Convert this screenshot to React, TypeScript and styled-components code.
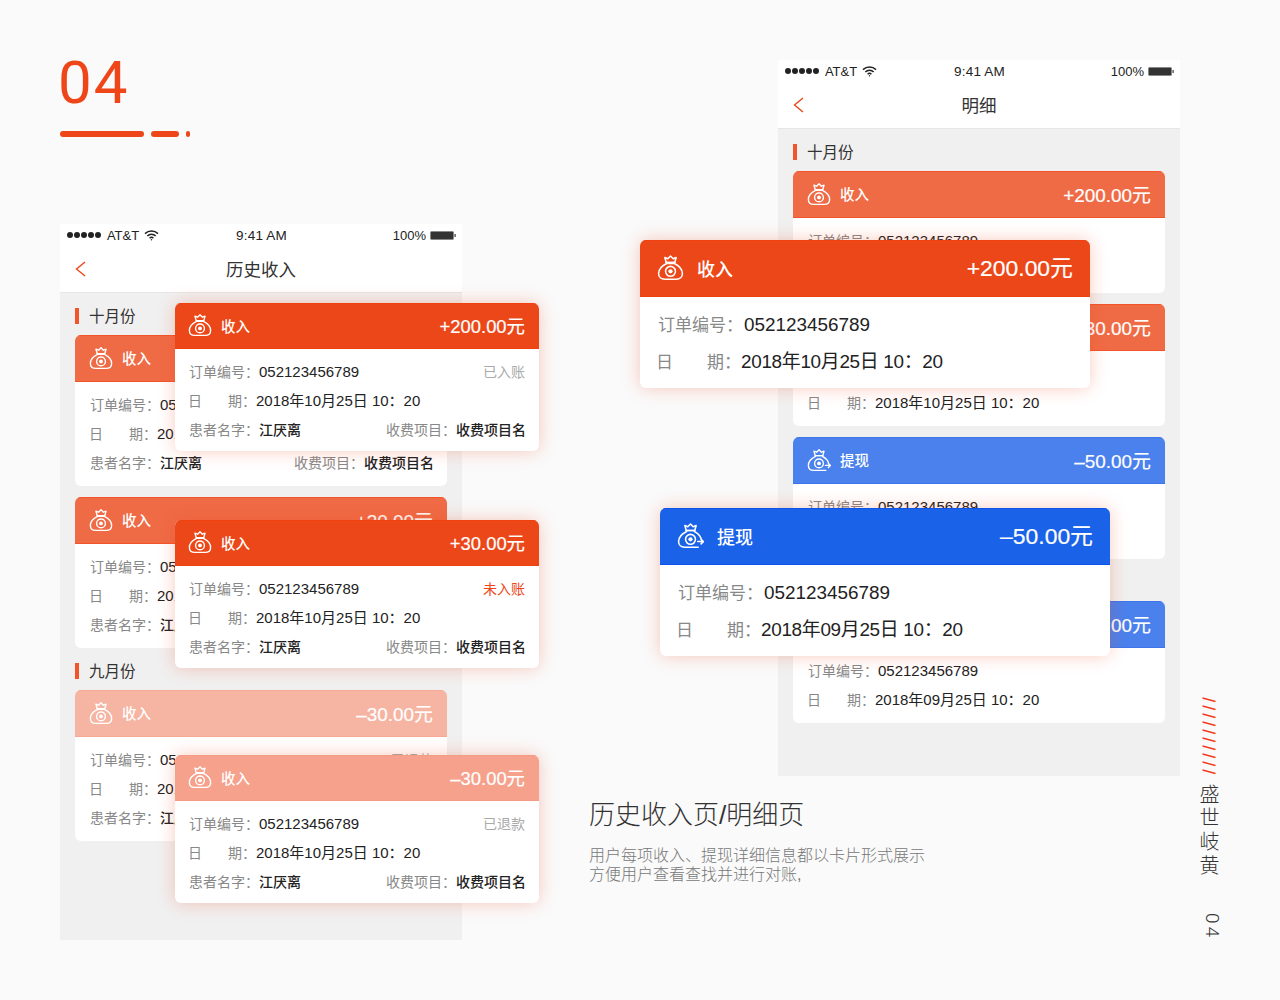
import React from 'react';
import styled, { createGlobalStyle } from 'styled-components';

const red = '#ee4618';

const GlobalStyle = createGlobalStyle`
  html, body {
    margin: 0;
    background: #fafafa;
    font-family: "Liberation Sans", "Noto Sans CJK SC", sans-serif;
    color: #333;
  }
`;

type Tone = 'orange' | 'soft' | 'pale' | 'peach' | 'blue' | 'softBlue';

const tones: Record<Tone, { bg: string; line: string }> = {
  orange: { bg: '#ec4718', line: '#f04010' },
  soft: { bg: '#ef6b46', line: '#f2552a' },
  pale: { bg: '#f6b4a2', line: '#f6aa96' },
  peach: { bg: '#f5a18c', line: '#f59a84' },
  blue: { bg: '#1a62e8', line: '#0c52ec' },
  softBlue: { bg: '#4a81ec', line: '#3d76ea' },
};

const Page = styled.div`
  position: relative;
  width: 1280px;
  height: 1000px;
  box-sizing: border-box;
  padding: 60px 50px 60px 60px;
  display: flex;
  overflow: hidden;
`;

const LeftColumn = styled.div`
  width: 402px;
  display: flex;
  flex-direction: column;
`;

const RightColumn = styled.div`
  width: 591px;
  margin-left: 127px;
  display: flex;
  flex-direction: column;
`;

const Chapter = styled.div`
  font-family: Roboto, sans-serif;
  font-size: 60px;
  line-height: 44px;
  height: 44px;
  letter-spacing: 2px;
  color: ${red};
  margin: 1px 0 0 -2px;
`;

const Dashes = styled.div`
  display: flex;
  gap: 7px;
  margin-top: 26px;
  margin-bottom: auto;
`;

const Dash = styled.span<{ $w: number }>`
  width: ${(p) => p.$w}px;
  height: 6px;
  border-radius: 3px;
  background: ${red};
`;

const Phone = styled.div<{ $alignEnd?: boolean }>`
  width: 402px;
  height: 716px;
  flex: none;
  background: #f0f0f0;
  margin-left: ${(p) => (p.$alignEnd ? 'auto' : '0')};
  overflow: hidden;
`;

const PhoneTop = styled.div`
  background: #fff;
  height: 68px;
  border-bottom: 1px solid #e6e6e6;
`;

const StatusBar = styled.div`
  height: 22px;
  padding: 0 6px 0 7px;
  display: flex;
  align-items: center;
  justify-content: space-between;
  font-size: 13px;
  color: #222;
`;

const StatusSide = styled.div`
  width: 140px;
  display: flex;
  align-items: center;
  gap: 4px;
  &:last-child {
    justify-content: flex-end;
  }
`;

const Clock = styled.span`
  font-size: 13.5px;
  letter-spacing: 0.2px;
`;

const WifiWrap = styled.span`
  display: flex;
  margin-left: 1px;
`;

const SignalDots = styled.div`
  display: flex;
  gap: 1.1px;
  margin-right: 1.5px;
  & i {
    width: 6px;
    height: 6px;
    border-radius: 50%;
    background: #222;
  }
`;

const NavBar = styled.div`
  position: relative;
  height: 44px;
  padding-bottom: 2px;
  display: flex;
  align-items: center;
  justify-content: center;
  font-size: 17.5px;
  color: #333;
`;

const BackIcon = styled.svg`
  position: absolute;
  left: 15px;
  top: 15px;
`;

const PhoneBody = styled.div`
  padding: 0 15px;
`;

const Month = styled.div`
  margin: 15px 0 11px;
  height: 16px;
  padding-left: 14px;
  position: relative;
  font-size: 15.5px;
  line-height: 17px;
  color: #333;
  &::before {
    content: '';
    position: absolute;
    left: 0;
    top: 0;
    width: 4px;
    height: 16px;
    background: #f2552a;
  }
`;

const Card = styled.div<{ $floating?: boolean; $shadow?: string }>`
  background: #fff;
  border-radius: 6px;
  overflow: hidden;
  margin-bottom: ${(p) => (p.$floating ? '0' : '11px')};
  box-shadow: ${(p) => (p.$shadow ? `0 0 18px ${p.$shadow}` : 'none')};
`;

const Floating = styled(Card)<{ $x: number; $y: number; $w: number }>`
  position: absolute;
  left: ${(p) => p.$x}px;
  top: ${(p) => p.$y}px;
  width: ${(p) => p.$w}px;
  height: 148px;
`;

const CardHead = styled.div<{ $tone: Tone; $big?: boolean; $floating?: boolean }>`
  box-sizing: border-box;
  height: ${(p) => (p.$big ? 57 : p.$floating ? 46 : 47)}px;
  padding: ${(p) => (p.$big ? '0 17px 2px 17px' : p.$floating ? '0 14px 2px 13px' : '0 14px 2px 14px')};
  display: flex;
  align-items: center;
  background: ${(p) => tones[p.$tone].bg};
  border-bottom: 1px solid ${(p) => tones[p.$tone].line};
  border-top: 1px solid ${(p) => tones[p.$tone].line};
  color: #fff;
`;

const HeadTitle = styled.span<{ $big?: boolean }>`
  font-size: ${(p) => (p.$big ? 18 : 14.5)}px;
  font-weight: 500;
  margin-left: ${(p) => (p.$big ? 13 : 9)}px;
  margin-right: auto;
`;

const Amount = styled.span<{ $big?: boolean; $floating?: boolean }>`
  font-size: ${(p) => (p.$big ? 22.9 : p.$floating ? 18.4 : 18.9)}px;
  padding-bottom: ${(p) => (p.$big ? 3 : 0)}px;
  -webkit-text-stroke: 0.2px #fff;
`;

const CardBody = styled.div<{ $big?: boolean; $floating?: boolean }>`
  padding: ${(p) => (p.$big ? '10px 18px 9px' : p.$floating ? '8px 13px 6px 14px' : '8px 13px 9px 15px')};
`;

const Row = styled.div<{ $big?: boolean }>`
  height: ${(p) => (p.$big ? 36.5 : 29)}px;
  line-height: ${(p) => (p.$big ? 36 : 29)}px;
  display: flex;
  align-items: baseline;
  font-size: ${(p) => (p.$big ? 17 : 14)}px;
`;

const PatientLine = styled(Row)`
  margin: 1px 0 -1px;
`;

const Label = styled.span`
  color: #888;
  flex: none;
`;

const DateLabel = styled.span<{ $big?: boolean }>`
  color: #888;
  flex: none;
  display: flex;
  justify-content: space-between;
  width: ${(p) => (p.$big ? 85 : 68)}px;
  margin-left: ${(p) => (p.$big ? -2 : -1)}px;
`;

const Value = styled.span<{ $big?: boolean; $date?: boolean }>`
  color: #222;
  font-size: ${(p) => (p.$big ? 18.9 : 15)}px;
  letter-spacing: ${(p) => (p.$big && p.$date ? '-0.3px' : '0')};
  margin-left: ${(p) => (p.$big && !p.$date ? 1 : 0)}px;
`;

const Strong = styled.span`
  color: #222;
  font-weight: 500;
`;

const Status = styled.span<{ $alert?: boolean }>`
  margin-left: auto;
  margin-right: 1px;
  color: ${(p) => (p.$alert ? red : '#aaa')};
`;

const Push = styled.span`
  margin-left: auto;
  color: #888;
`;

const Caption = styled.div`
  margin-top: 24px;
  color: #333;
`;

const CaptionTitle = styled.div`
  font-size: 26px;
  line-height: 30px;
  font-weight: 300;
`;

const CaptionText = styled.div`
  margin-top: 16px;
  font-size: 16px;
  line-height: 19px;
  font-weight: 300;
  color: #777;
`;

const Rail = styled.div`
  width: 40px;
  margin-left: 8px;
  display: flex;
  flex-direction: column;
  align-items: center;
  justify-content: flex-end;
`;

const SlashWrap = styled.div`
  display: flex;
  margin-left: 2px;
`;

const RailName = styled.div`
  writing-mode: vertical-rl;
  font-size: 20px;
  line-height: 20px;
  letter-spacing: 3.8px;
  font-weight: 300;
  margin-top: 7px;
  color: #333;
`;

const RailNumber = styled.div`
  writing-mode: vertical-rl;
  font-family: Roboto, sans-serif;
  font-size: 19px;
  line-height: 18px;
  letter-spacing: 3px;
  font-weight: 300;
  margin-top: 34px;
  margin-left: 7px;
  color: #333;
`;

const BagIcon = ({ size, out }: { size: number; out?: boolean }) => (
  <svg width={size} height={size} viewBox="0 0 24 24" fill="none" stroke="#fff" strokeWidth="1.4" strokeLinejoin="round" strokeLinecap="round">
    <path d="M8.2 7.6 7 3.2l2.6 1L12 1.8l2.4 2.4 2.6-1-1.2 4.4z" />
    <path d="M8.2 7.6h7.6" />
    {out ? (
      <path d="M8.6 8.4C4.4 10.4 1.4 14 1.4 17.4c0 3.2 2.4 5 5.4 5h12M15.4 8.4c2.8 1.4 5 3.6 6 6.2" />
    ) : (
      <path d="M8.6 8.4C4.4 10.4 1.4 14 1.4 17.4c0 3.2 2.4 5 5.4 5h10.4c3 0 5.4-1.8 5.4-5 0-3.4-3-7-7.2-9z" />
    )}
    <circle cx="12" cy="15.4" r="4.4" />
    <circle cx="12" cy="15.4" r="1.9" fill="#fff" stroke="none" />
    {out && <path d="M18.4 17.4h5M21.4 15.4l2 2-2 2" />}
  </svg>
);

const WifiIcon = () => (
  <svg width="15" height="11" viewBox="0 0 15 11" fill="none" stroke="#222" strokeWidth="1.5">
    <path d="M1 3.6a9.4 9.4 0 0 1 13 0" />
    <path d="M3.3 6a6 6 0 0 1 8.4 0" />
    <path d="M5.6 8.2a2.8 2.8 0 0 1 3.8 0" />
    <circle cx="7.5" cy="9.8" r="0.7" fill="#222" stroke="none" />
  </svg>
);

const BatteryIcon = () => (
  <svg width="26" height="9" viewBox="0 0 26 9">
    <rect x="0.5" y="0.5" width="23" height="8" rx="1" fill="#333" stroke="#888" strokeWidth="1" />
    <rect x="24.4" y="3" width="1.4" height="3" fill="#555" />
  </svg>
);

const Slashes = () => (
  <svg width="14" height="80" viewBox="0 0 14 80" stroke="#f2391c" strokeWidth="1.3">
    {Array.from({ length: 10 }, (_, i) => (
      <line key={i} x1="0.5" y1={1 + i * 8} x2="13.5" y2={4.5 + i * 8} />
    ))}
  </svg>
);

interface Entry {
  tone: Tone;
  title: string;
  amount: string;
  date: string;
  status?: string;
  alert?: boolean;
}

const Head = ({ e, big, floating }: { e: Entry; big?: boolean; floating?: boolean }) => (
  <CardHead $tone={e.tone} $big={big} $floating={floating}>
    <BagIcon size={big ? 27 : 24} out={e.title === '提现'} />
    <HeadTitle $big={big}>{e.title}</HeadTitle>
    <Amount $big={big} $floating={floating}>{e.amount}</Amount>
  </CardHead>
);

const OrderRow = ({ e, big }: { e: Entry; big?: boolean }) => (
  <Row $big={big}>
    <Label>订单编号：</Label>
    <Value $big={big}>052123456789</Value>
    {e.status && <Status $alert={e.alert}>{e.status}</Status>}
  </Row>
);

const DateRow = ({ e, big }: { e: Entry; big?: boolean }) => (
  <Row $big={big}>
    <DateLabel $big={big}>
      <span>日</span>
      <span>期：</span>
    </DateLabel>
    <Value $big={big} $date>{e.date}</Value>
  </Row>
);

const PatientRow = () => (
  <PatientLine>
    <Label>患者名字：</Label>
    <Strong>江厌离</Strong>
    <Push>收费项目：</Push>
    <Strong>收费项目名</Strong>
  </PatientLine>
);

const PhoneCard = ({ e, patient }: { e: Entry; patient?: boolean }) => (
  <Card>
    <Head e={e} />
    <CardBody>
      <OrderRow e={e} />
      <DateRow e={e} />
      {patient && <PatientRow />}
    </CardBody>
  </Card>
);

const PhoneFrame = ({ title, alignEnd, children }: { title: string; alignEnd?: boolean; children: React.ReactNode }) => (
  <Phone $alignEnd={alignEnd}>
    <PhoneTop>
      <StatusBar>
        <StatusSide>
          <SignalDots>
            {[0, 1, 2, 3, 4].map((i) => <i key={i} />)}
          </SignalDots>
          <span>AT&amp;T</span>
          <WifiWrap><WifiIcon /></WifiWrap>
        </StatusSide>
        <Clock>9:41 AM</Clock>
        <StatusSide>
          <span>100%</span>
          <BatteryIcon />
        </StatusSide>
      </StatusBar>
      <NavBar>
        <BackIcon width="11" height="16" viewBox="0 0 11 16" fill="none" stroke={red} strokeWidth="1.4">
          <path d="M10 1 1.5 8l8.5 7" />
        </BackIcon>
        {title}
      </NavBar>
    </PhoneTop>
    <PhoneBody>{children}</PhoneBody>
  </Phone>
);

const oct = '2018年10月25日 10：20';
const sep = '2018年09月25日 10：20';

const floatingSmall: (Entry & { y: number })[] = [
  { y: 303, tone: 'orange', title: '收入', amount: '+200.00元', date: oct, status: '已入账' },
  { y: 520, tone: 'orange', title: '收入', amount: '+30.00元', date: oct, status: '未入账', alert: true },
  { y: 755, tone: 'peach', title: '收入', amount: '–30.00元', date: oct, status: '已退款' },
];

const floatingBig: (Entry & { x: number; y: number })[] = [
  { x: 640, y: 240, tone: 'orange', title: '收入', amount: '+200.00元', date: oct },
  { x: 660, y: 508, tone: 'blue', title: '提现', amount: '–50.00元', date: sep },
];

const App: React.FunctionComponent = () => (
  <Page>
    <GlobalStyle />
    <LeftColumn>
      <Chapter>04</Chapter>
      <Dashes>
        <Dash $w={84} />
        <Dash $w={28} />
        <Dash $w={4} />
      </Dashes>
      <PhoneFrame title="历史收入">
        <Month>十月份</Month>
        <PhoneCard patient e={{ tone: 'soft', title: '收入', amount: '+200.00元', date: oct, status: '已入账' }} />
        <PhoneCard patient e={{ tone: 'soft', title: '收入', amount: '+30.00元', date: oct, status: '未入账', alert: true }} />
        <Month>九月份</Month>
        <PhoneCard patient e={{ tone: 'pale', title: '收入', amount: '–30.00元', date: sep, status: '已退款' }} />
      </PhoneFrame>
    </LeftColumn>
    <RightColumn>
      <PhoneFrame title="明细" alignEnd>
        <Month>十月份</Month>
        <PhoneCard e={{ tone: 'soft', title: '收入', amount: '+200.00元', date: oct }} />
        <PhoneCard e={{ tone: 'soft', title: '收入', amount: '+30.00元', date: oct }} />
        <PhoneCard e={{ tone: 'softBlue', title: '提现', amount: '–50.00元', date: oct }} />
        <Month>九月份</Month>
        <PhoneCard e={{ tone: 'softBlue', title: '提现', amount: '–50.00元', date: sep }} />
      </PhoneFrame>
      <Caption>
        <CaptionTitle>历史收入页/明细页</CaptionTitle>
        <CaptionText>
          用户每项收入、提现详细信息都以卡片形式展示
          <br />
          方便用户查看查找并进行对账,
        </CaptionText>
      </Caption>
    </RightColumn>
    <Rail>
      <SlashWrap><Slashes /></SlashWrap>
      <RailName>盛世岐黄</RailName>
      <RailNumber>04</RailNumber>
    </Rail>

    {floatingSmall.map((e) => (
      <Floating key={e.y} $floating $x={175} $y={e.y} $w={364} $shadow="rgba(238, 70, 24, 0.28)">
        <Head e={e} floating />
        <CardBody $floating>
          <OrderRow e={e} />
          <DateRow e={e} />
          <PatientRow />
        </CardBody>
      </Floating>
    ))}
    {floatingBig.map((e) => (
      <Floating key={e.y} $floating $x={e.x} $y={e.y} $w={450} $shadow="rgba(238, 70, 24, 0.28)">
        <Head e={e} big />
        <CardBody $big>
          <OrderRow e={e} big />
          <DateRow e={e} big />
        </CardBody>
      </Floating>
    ))}
  </Page>
);

export default App;
